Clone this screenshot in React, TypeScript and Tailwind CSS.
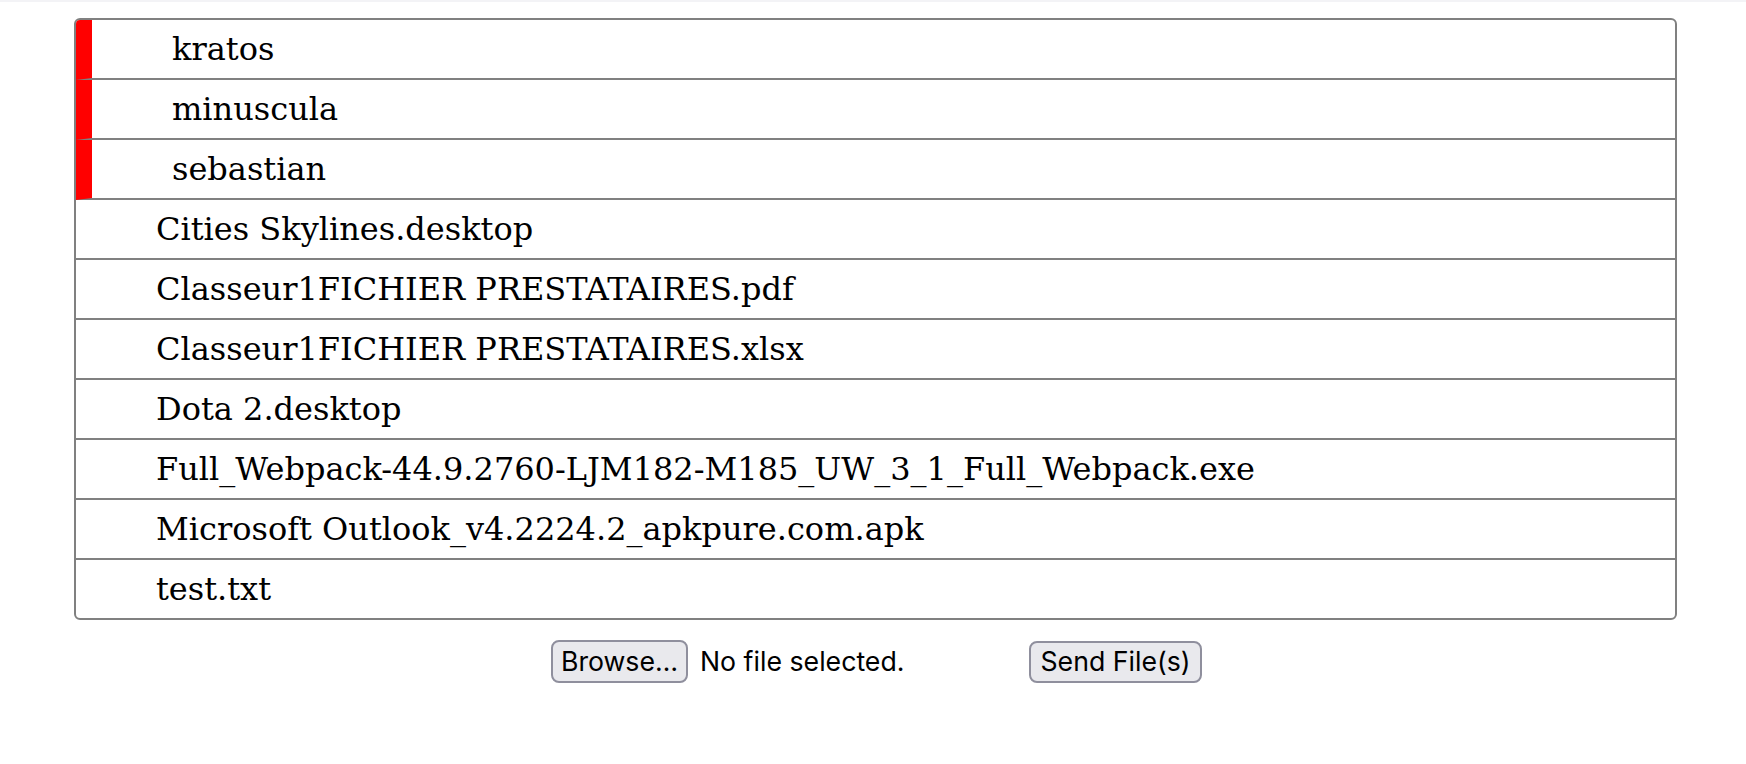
import React from "react";

type Entry = {
  name: string;
  dir?: boolean;
};

const entries: Entry[] = [
  { name: "kratos", dir: true },
  { name: "minuscula", dir: true },
  { name: "sebastian", dir: true },
  { name: "Cities Skylines.desktop" },
  { name: "Classeur1FICHIER PRESTATAIRES.pdf" },
  { name: "Classeur1FICHIER PRESTATAIRES.xlsx" },
  { name: "Dota 2.desktop" },
  { name: "Full_Webpack-44.9.2760-LJM182-M185_UW_3_1_Full_Webpack.exe" },
  { name: "Microsoft Outlook_v4.2224.2_apkpure.com.apk" },
  { name: "test.txt" },
];

function Row({ entry, last }: { entry: Entry; last: boolean }) {
  return (
    <div
      className={
        "flex items-center pl-[80px] border-[#808080] " +
        (last ? "h-[58px] " : "h-[60px] border-b-2 ") +
        (entry.dir ? "border-l-[16px] border-l-[#ff0000]" : "")
      }
    >
      <span className="text-[32px] text-black whitespace-pre">{entry.name}</span>
    </div>
  );
}

export default function App() {
  return (
    <div className="w-[1746px] h-[764px] bg-white" style={{ fontFamily: '"DejaVu Serif", serif' }}>
      <div className="h-[2px] bg-[#f3f3f6]" />
      <div className="ml-[74px] mt-[16px] w-[1603px] border-2 border-[#808080] rounded-[6px] overflow-hidden">
        {entries.map((e, i) => (
          <Row key={e.name} entry={e} last={i == entries.length - 1} />
        ))}
      </div>

      <div
        className="flex items-center mt-[20px] ml-[551px] text-[26.7px] text-black"
        style={{ fontFamily: "Inter, sans-serif" }}
      >
        <button className="w-[137px] h-[43px] flex items-center justify-center bg-[#e9e9ed] border-2 border-[#8f8f9d] rounded-[8px] leading-none">
          Browse…
        </button>
        <span className="ml-[12px] w-[329px] leading-none">No file selected.</span>
        <button className="w-[173px] h-[42px] flex items-center justify-center bg-[#e9e9ed] border-2 border-[#8f8f9d] rounded-[8px] leading-none">
          Send File(s)
        </button>
      </div>
    </div>
  );
}
